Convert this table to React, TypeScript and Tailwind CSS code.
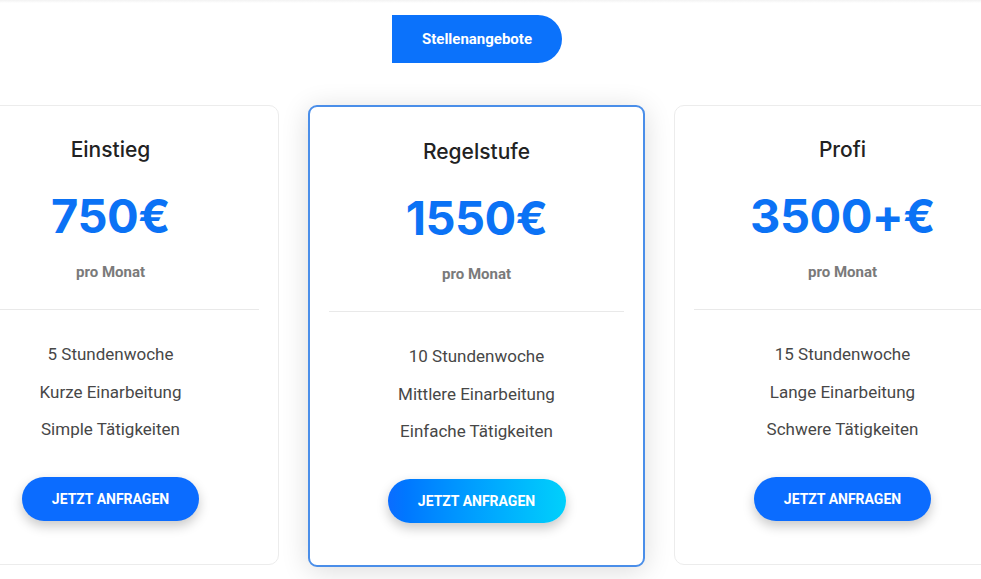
import React from 'react';

const plans = [
  {
    id: 'einstieg',
    title: 'Einstieg',
    price: '750€',
    features: ['5 Stundenwoche', 'Kurze Einarbeitung', 'Simple Tätigkeiten'],
    featured: false,
  },
  {
    id: 'regel',
    title: 'Regelstufe',
    price: '1550€',
    features: ['10 Stundenwoche', 'Mittlere Einarbeitung', 'Einfache Tätigkeiten'],
    featured: true,
  },
  {
    id: 'profi',
    title: 'Profi',
    price: '3500+€',
    features: ['15 Stundenwoche', 'Lange Einarbeitung', 'Schwere Tätigkeiten'],
    featured: false,
  },
];

const heading = { fontFamily: 'Inter, "Open Sans", sans-serif' };

export default function App() {
  return (
    <div
      className="w-[981px] h-[579px] overflow-hidden bg-white relative"
      style={{ fontFamily: 'Roboto, "Liberation Sans", sans-serif' }}
    >
      <div className="h-[3px] bg-gradient-to-b from-[#f2f2f2] to-white" />

      <div className="flex justify-center mt-[12px] -ml-[27px]">
        <button className="w-[170px] h-[48px] bg-[#0b72fb] text-white text-[15px] font-bold rounded-r-full">
          Stellenangebote
        </button>
      </div>

      <div className="flex gap-[29px] mt-[42px] -ml-[58px] w-[1069px]">
        {plans.map((plan) => (
          <div
            key={plan.id}
            className={
              plan.featured
                ? 'w-[337px] shrink-0 h-[462px] bg-white border-2 border-[#4a8ee9] rounded-[9px] shadow-[0_4px_28px_rgba(0,0,0,0.14)] flex flex-col items-center pt-[30px] px-[19px]'
                : 'w-[337px] shrink-0 h-[460px] bg-white border border-[#ececec] rounded-[10px] flex flex-col items-center pt-[29px] px-[19px]'
            }
          >
            <h3 className="text-[21px] leading-[30px] font-medium text-[#222]" style={heading}>
              {plan.title}
            </h3>
            <div
              className="mt-[22px] text-[47px] leading-[58px] font-bold text-[#0b72f5] tracking-[-0.5px]"
              style={heading}
            >
              {plan.price}
            </div>
            <div className="mt-[17px] text-[15px] leading-[20px] font-bold text-[#7a7a7a]">pro Monat</div>
            <div className="w-full h-px bg-[#e9e9e9] mt-[27px]" />
            <ul className="mt-[32px] flex flex-col items-center gap-[12.5px] text-[17px] leading-[25px] text-[#474747]">
              {plan.features.map((f) => (
                <li key={f}>{f}</li>
              ))}
            </ul>
            <button
              className={
                plan.featured
                  ? 'mt-[35px] w-[178px] h-[44px] rounded-full text-white text-[14px] font-bold bg-gradient-to-r from-[#0b6cff] to-[#00d0fb] shadow-[0_5px_12px_rgba(0,0,0,0.22)]'
                  : 'mt-[35px] w-[177px] h-[44px] rounded-full text-white text-[14px] font-bold bg-[#0b6cff] shadow-[0_5px_12px_rgba(0,0,0,0.22)]'
              }
            >
              JETZT ANFRAGEN
            </button>
          </div>
        ))}
      </div>
    </div>
  );
}
